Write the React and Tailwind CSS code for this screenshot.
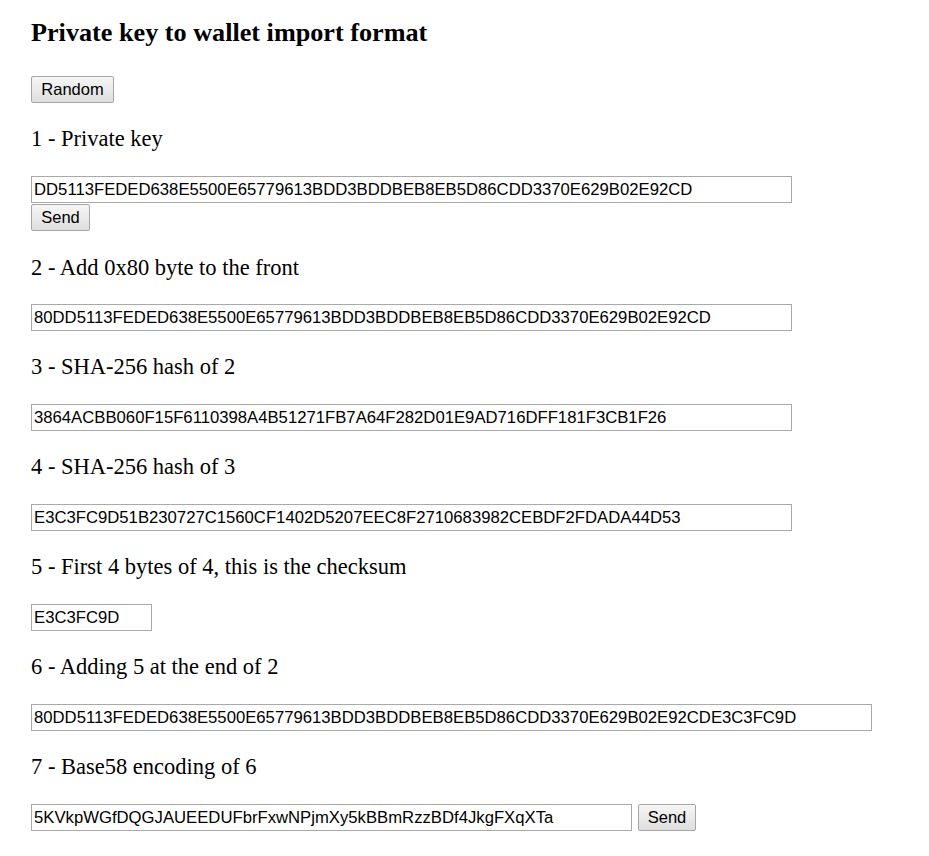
import React from "react";

const inputCls =
  "block h-[27px] border border-[#a9a9a9] bg-white px-[2px] text-[16.7px] text-black font-['Liberation_Sans',Arial,sans-serif] outline-none";
const btnCls =
  "h-[27px] border border-[#a6a6a6] rounded-[2px] bg-gradient-to-b from-[#f6f6f6] to-[#dedede] text-[16.5px] text-black font-['Liberation_Sans',Arial,sans-serif] leading-none";

function Label({ children, mt = "mt-[24px]" }) {
  return (
    <div className={`${mt} h-[24px] leading-[24px] text-[22.5px] text-black`}>
      {children}
    </div>
  );
}

export default function App() {
  const pk = "DD5113FEDED638E5500E65779613BDD3BDDBEB8EB5D86CDD3370E629B02E92CD";
  return (
    <div className="min-h-[856px] bg-white pl-[31px] pt-[19px] font-['Liberation_Serif','Times_New_Roman',serif]">
      <h2 className="h-[28px] leading-[28px] text-[26.2px] font-bold text-black">
        Private key to wallet import format
      </h2>
      <button className={`${btnCls} mt-[29px] w-[83px]`}>Random</button>

      <Label>1 - Private key</Label>
      <input readOnly className={`${inputCls} mt-[25px] w-[761px]`} value={pk} />
      <button className={`${btnCls} mt-[1px] w-[59px] block`}>Send</button>

      <Label mt="mt-[25px]">2 - Add 0x80 byte to the front</Label>
      <input readOnly className={`${inputCls} mt-[24px] w-[761px]`} value={"80" + pk} />

      <Label>3 - SHA-256 hash of 2</Label>
      <input
        readOnly
        className={`${inputCls} mt-[25px] w-[761px]`}
        value="3864ACBB060F15F6110398A4B51271FB7A64F282D01E9AD716DFF181F3CB1F26"
      />

      <Label>4 - SHA-256 hash of 3</Label>
      <input
        readOnly
        className={`${inputCls} mt-[25px] w-[761px]`}
        value="E3C3FC9D51B230727C1560CF1402D5207EEC8F2710683982CEBDF2FDADA44D53"
      />

      <Label>5 - First 4 bytes of 4, this is the checksum</Label>
      <input readOnly className={`${inputCls} mt-[25px] w-[121px]`} value="E3C3FC9D" />

      <Label>6 - Adding 5 at the end of 2</Label>
      <input
        readOnly
        className={`${inputCls} mt-[25px] w-[841px]`}
        value={"80" + pk + "E3C3FC9D"}
      />

      <Label>7 - Base58 encoding of 6</Label>
      <div className="mt-[25px] flex items-center gap-[6px]">
        <input
          readOnly
          className={`${inputCls} w-[601px]`}
          value="5KVkpWGfDQGJAUEEDUFbrFxwNPjmXy5kBBmRzzBDf4JkgFXqXTa"
        />
        <button className={`${btnCls} w-[58px]`}>Send</button>
      </div>
    </div>
  );
}
